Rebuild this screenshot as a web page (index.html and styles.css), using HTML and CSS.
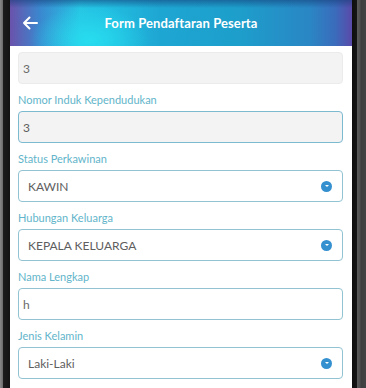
FILE: index.html
```html
<!DOCTYPE html>
<html>
<head>
<meta charset="utf-8">
<link rel="stylesheet" href="styles.css">
</head>
<body>
<div class="device">
  <div class="frame-left"></div>
  <div class="app">
    <header class="header">
      <svg class="back" width="16" height="14" viewBox="0 0 16 14"><path d="M15 7H2M7.5 1.5L2 7l5.5 5.5" fill="none" stroke="#fff" stroke-width="2" stroke-linecap="round" stroke-linejoin="round"/></svg>
      <h1 class="title">Form Pendaftaran Peserta</h1>
    </header>
    <main class="form">
      <div class="field field-disabled"><span class="val">3</span></div>

      <label class="label">Nomor Induk Kependudukan</label>
      <div class="field field-filled"><span class="val">3</span></div>

      <label class="label">Status Perkawinan</label>
      <div class="field select"><span class="val">KAWIN</span><span class="caret"></span></div>

      <label class="label">Hubungan Keluarga</label>
      <div class="field select"><span class="val">KEPALA KELUARGA</span><span class="caret"></span></div>

      <label class="label">Nama Lengkap</label>
      <div class="field text"><span class="val">h</span></div>

      <label class="label">Jenis Kelamin</label>
      <div class="field select"><span class="val">Laki-Laki</span><span class="caret"></span></div>
    </main>
  </div>
  <div class="frame-right"></div>
</div>
</body>
</html>
```
FILE: styles.css
```css
html, body {
  margin: 0;
  padding: 0;
  background: #1a1a1a;
}
.device {
  display: flex;
  width: 366px;
  height: 388px;
  overflow: hidden;
  font-family: "Lato", "Noto Sans", sans-serif;
}
.frame-left {
  width: 10px;
  flex: none;
  background: linear-gradient(to right, #8a8a8a 0, #6a6a6a 3px, #1c1c1c 3px, #141414 10px);
}
.frame-right {
  width: 14px;
  flex: none;
  background: linear-gradient(to right, #0e0e0e 0, #151515 5px, #5a5a5a 5px, #4f4f4f 8px, #3e3e3e 9px, #444 14px);
}
.app {
  flex: 1;
  background: #fff;
  display: flex;
  flex-direction: column;
}
.header {
  height: 46px;
  flex: none;
  display: flex;
  align-items: center;
  position: relative;
  background:
    linear-gradient(to bottom, rgba(20,60,120,0.55) 0, rgba(20,60,120,0) 8px),
    radial-gradient(ellipse 60px 34px at 80px 40px, rgba(40,225,240,0.85), rgba(40,225,240,0) 100%),
    linear-gradient(to right, #6a52ab 0, #3a88cf 30px, #26c4e4 70px, #22bfe2 95px, #1ea6d2 150px, #1d9ecb 230px, #2a86c4 300px, #3a6cbc 325px, #5a4aa8 342px);
}
.back {
  position: absolute;
  left: 12px;
  top: 16px;
}
.title {
  margin: 0;
  width: 100%;
  text-align: center;
  color: #fff;
  font-size: 13px;
  font-weight: 700;
  letter-spacing: 0.1px;
}
.form {
  padding: 6px 9px 0 8px;
  display: flex;
  flex-direction: column;
}
.label {
  display: block;
  margin: 9px 0 4px;
  line-height: 14px;
  font-size: 11px;
  color: #62b5ca;
}
.field {
  box-sizing: border-box;
  height: 32px;
  border-radius: 4px;
  display: flex;
  align-items: center;
  font-size: 12px;
  color: #5e5e5e;
}
.field-disabled {
  background: #f3f3f3;
  border: 1px solid #ebebeb;
  padding-left: 4px;
  color: #6a6a6a;
}
.field-filled {
  background: #f3f3f3;
  border: 1px solid #7cbad0;
  padding-left: 4px;
}
.select {
  background: #fff;
  border: 1px solid #92c3d2;
  padding: 0 9px;
  justify-content: space-between;
}
.text {
  background: #fff;
  border: 1px solid #92c3d2;
  padding-left: 4px;
  color: #6a6a6a;
}
.caret {
  width: 11px;
  height: 11px;
  border-radius: 50%;
  background: #3590cf;
  position: relative;
  margin-right: 1px;
}
.caret::after {
  content: "";
  position: absolute;
  left: 3.5px;
  top: 4px;
  width: 0;
  height: 0;
  border-left: 2px solid transparent;
  border-right: 2px solid transparent;
  border-top: 2.5px solid #fff;
}
```
